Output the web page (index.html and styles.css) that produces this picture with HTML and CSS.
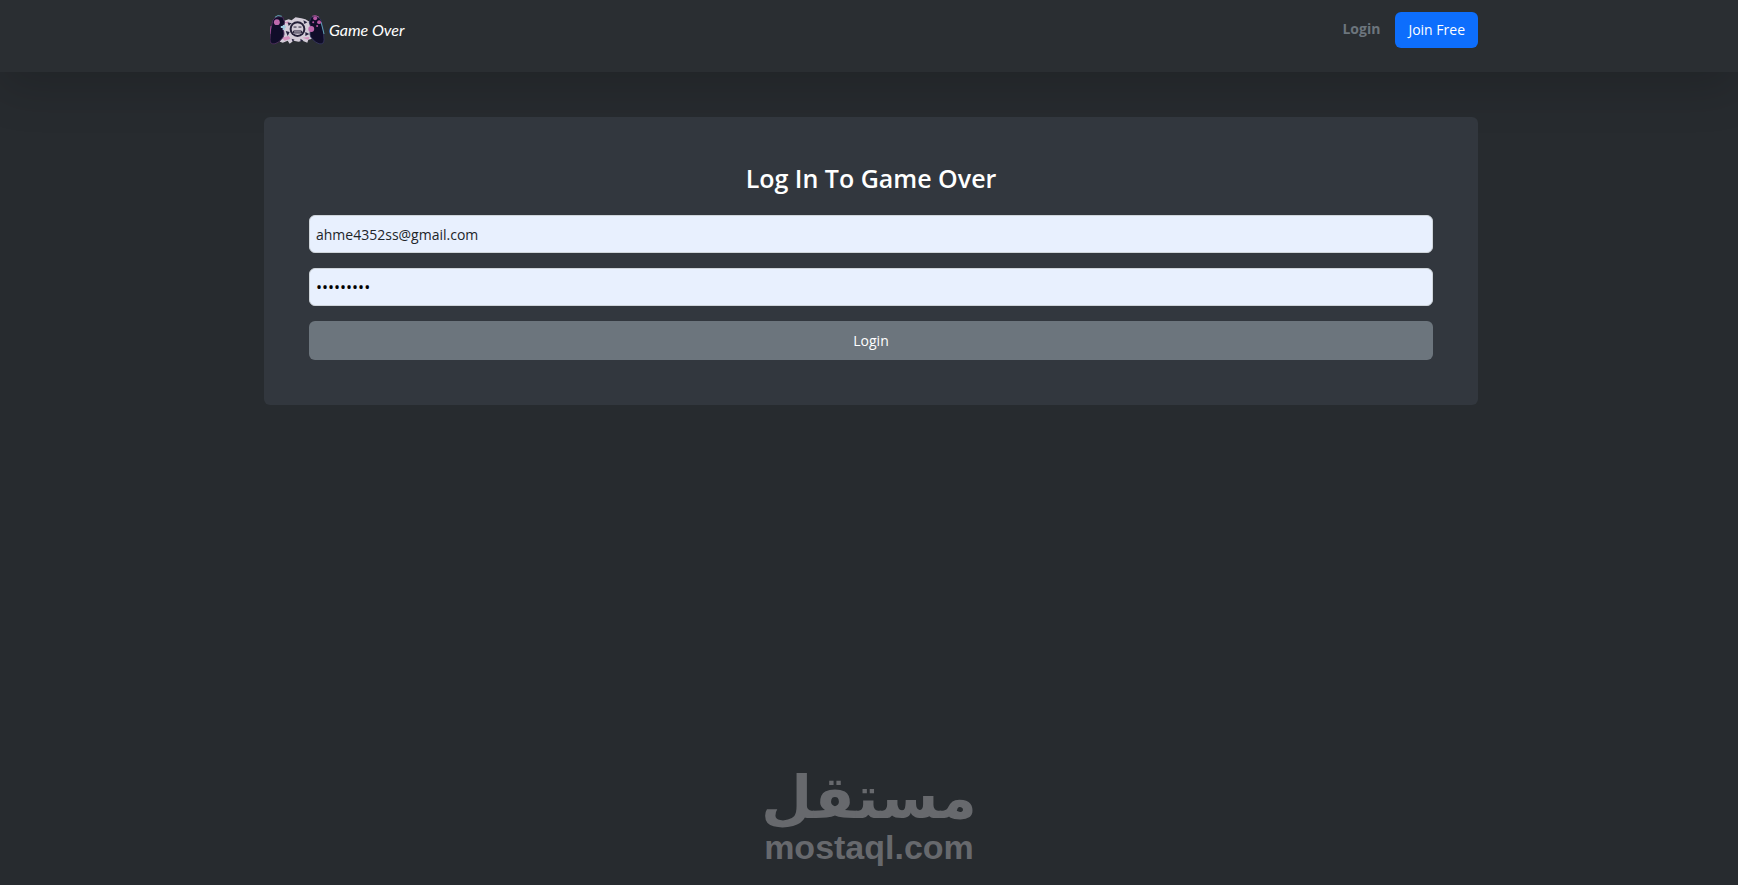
FILE: index.html
```html
<!DOCTYPE html>
<html lang="en">
<head>
    <meta charset="UTF-8">
    <meta name="viewport" content="width=device-width, initial-scale=1.0">
    <title>Game Over</title>
    <link rel="stylesheet" href="styles.css">
</head>
<body>
    <header class="navbar">
        <div class="container navbar-inner">
            <a class="brand" href="#">
                <svg class="brand-logo" viewBox="0 0 56 32" aria-hidden="true">
                    <!-- splash -->
                    <path d="M13 7l6-2 3 1 4-3 6 1 4 1 5 3 1 6-1 7 2 4-4 1-1 3-5-2-4 1-5-1-4 3-2-3-5 2-3-1 2-4-1-6z" fill="#d3ccd8"/>
                    <path d="M12 24l7-2 2 3-6 2zM33 24l7-1-1 3zM15 8l4-1-1 3z" fill="#d690bd"/>
                    <path d="M16 17l4 1-2 4zM36 18l4 2-4 2zM18 8l4 1-3 3zM34 6l4 2-3 2zM22 25l3 1-2 2zM31 25l3 2-3 1z" fill="#25223e"/>
                    <!-- grips -->
                    <path d="M3 6Q6 1 13 3L15 8 13 15Q16 21 12 25Q9 29 5 30Q0 31 0 26Q0 15 3 6z" fill="#100d29" stroke="#4a2c5a" stroke-width="1"/>
                    <path d="M52 6Q49 1 42 3L40 8 42 15Q39 21 43 25Q46 29 50 30Q55 31 55 26Q55 15 52 6z" fill="#100d29" stroke="#33335a" stroke-width="1"/>
                    <path d="M5 3Q8 0 12 2M52 8L55 20" fill="none" stroke="#5fa4b4" stroke-width="1"/>
                    <path d="M43 2Q46 0 50 3M1 12L0 20" fill="none" stroke="#a04f95" stroke-width="1"/>
                    <!-- face -->
                    <circle cx="28" cy="15" r="8" fill="#242038"/>
                    <circle cx="28" cy="15" r="6" fill="#d3ccd8"/>
                    <path d="M24 13h3M29 13h3M24 17h8v2h-8z" fill="none" stroke="#242038" stroke-width="1"/>
                    <!-- buttons -->
                    <path d="M14 11v5M11 13h5" stroke="#9cc9dc" stroke-width="2"/>
                    <circle cx="7" cy="8" r="3" fill="#be69ad"/>
                    <circle cx="42" cy="15" r="3" fill="#be69ad"/>
                    <g fill="#b758a3">
                        <circle cx="46" cy="4" r="2"/>
                        <circle cx="44" cy="8" r="1"/>
                        <circle cx="50" cy="8" r="2"/>
                        <circle cx="48" cy="12" r="1"/>
                    </g>
                </svg>
                <span class="brand-name">Game Over</span>
            </a>
            <nav class="nav-links">
                <a class="nav-link" href="#">Login</a>
                <a class="btn btn-primary" href="#">Join Free</a>
            </nav>
        </div>
    </header>

    <main class="container">
        <form class="login-card">
            <h1 class="login-title">Log In To Game Over</h1>
            <input class="form-control" type="email" value="ahme4352ss@gmail.com" aria-label="Email">
            <input class="form-control password" type="password" value="gameover1" aria-label="Password">
            <button class="btn btn-secondary" type="submit">Login</button>
        </form>
    </main>

    <footer class="watermark">
        <span class="watermark-ar" lang="ar" dir="rtl">مستقل</span>
        <span class="watermark-en">mostaql.com</span>
    </footer>
</body>
</html>
```

FILE: styles.css
```css
/* Global Styles */
* {
    box-sizing: border-box;
}
body {
    display: flex;
    flex-direction: column;
    min-height: 100vh;
    margin: 0;
    background-color: #272b2f;
    color: white;
    font-family: 'Open Sans', sans-serif;
    font-size: 14px;
}
a {
    text-decoration: none;
}
.container {
    width: 100%;
    max-width: 1218px;
    margin: 0 auto;
    padding-left: 4px;
}

/* Navbar */
.navbar {
    padding: 12px 0 24px;
    background-color: #2a2e32;
    box-shadow: 0 16px 48px rgba(0, 0, 0, 0.16);
}
.navbar-inner {
    display: flex;
    justify-content: space-between;
    align-items: center;
}
.brand {
    display: flex;
    align-items: center;
    gap: 4px;
    padding-left: 6px;
    color: white;
}
.brand-logo {
    width: 55px;
    height: 32px;
}
.brand-name {
    padding-bottom: 2px;
    font-family: Lato, sans-serif;
    font-size: 16px;
    font-style: italic;
}
.nav-links {
    display: flex;
    align-items: center;
    gap: 15px;
}
.nav-link {
    color: #6c757d;
    font-weight: 700;
    line-height: 32px;
    padding-bottom: 2px;
}

/* Buttons */
.btn {
    border: 0;
    border-radius: 6px;
    color: white;
    font-family: inherit;
    font-size: 14px;
    text-align: center;
}
.btn-primary {
    padding: 0 13px;
    background-color: #0d6efd;
    line-height: 36px;
}
.btn-secondary {
    padding: 0;
    background-color: #6c757d;
    line-height: 39px;
}

/* Login form */
.login-card {
    display: flex;
    flex-direction: column;
    gap: 15px;
    margin-top: 45px;
    padding: 45px;
    border-radius: 6px;
    background-color: #32373e;
}
.login-title {
    margin: 0;
    padding-bottom: 6px;
    font-size: 25px;
    font-weight: 600;
    line-height: 32px;
    text-align: center;
}
.form-control {
    width: 100%;
    height: 38px;
    padding: 0 6px;
    border: 1px solid #ced4da;
    border-radius: 6px;
    background-color: #e8f0fe;
    color: #212529;
    font-family: inherit;
    font-size: 14px;
}
.password {
    color: black;
    font-size: 16px;
}

/* Watermark */
.watermark {
    display: flex;
    flex-direction: column;
    align-items: center;
    margin-top: auto;
    padding-bottom: 18px;
    color: #67696d;
    font-weight: 700;
}
.watermark-ar {
    font-family: 'DejaVu Sans', sans-serif;
    font-size: 59px;
    line-height: 58px;
}
.watermark-en {
    font-family: 'Liberation Sans', sans-serif;
    font-size: 34px;
    line-height: 40px;
}
```
